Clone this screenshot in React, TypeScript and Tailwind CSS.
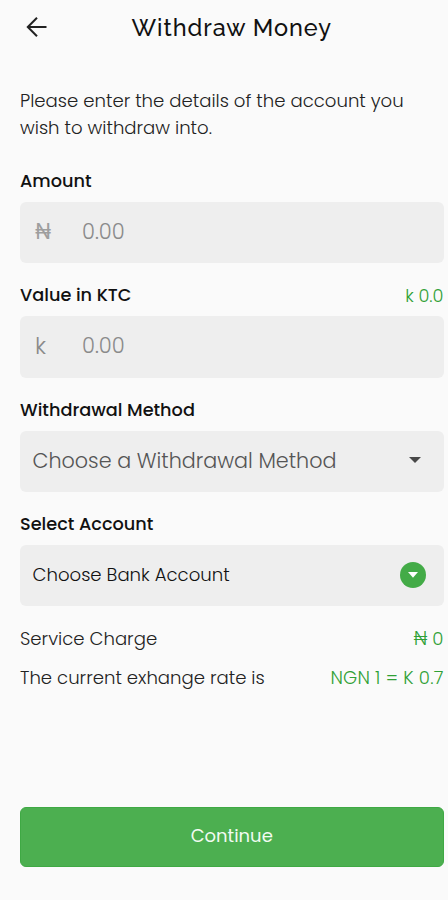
import type { ReactNode } from "react";

const body = "font-['Poppins','Inter','Liberation_Sans',sans-serif] [font-feature-settings:'cv11']";

function Label({ children, value }: { children: ReactNode; value?: ReactNode }) {
  return (
    <div className="flex h-[53px] items-end justify-between pb-2 text-[17.7px] leading-[26px] whitespace-nowrap">
      <label className="font-medium text-[#111111]">{children}</label>
      {value}
    </div>
  );
}

function Field({ children }: { children: ReactNode }) {
  return (
    <div className="flex h-[61.3px] items-center rounded-md bg-[#eeeeee] pb-[2px] whitespace-nowrap">
      {children}
    </div>
  );
}

export default function App() {
  return (
    <main className={`flex h-[900px] w-[448px] flex-col bg-[#fafafa] pr-[4.5px] pl-5 ${body}`}>
      <header className="flex h-[54px] shrink-0 items-center">
        <svg className="ml-[6px] h-[22px] w-[22px]" viewBox="0 0 22 22" fill="none" stroke="#222222" strokeWidth="2">
          <path d="M20.5 11H2M11 1.8L1.8 11L11 20.2" />
        </svg>
        <h1 className="ml-[83.5px] pt-px font-['Raleway','Lato',sans-serif] text-[23.5px] leading-8 font-medium tracking-[0.95px] whitespace-nowrap text-[#111111]">
          Withdraw Money
        </h1>
      </header>

      <p className="mt-[33px] text-[18.1px] leading-[27px] font-light whitespace-nowrap text-[#222222]">
        Please enter the details of the account you
        <br />
        wish to withdraw into.
      </p>

      <div className="mt-2">
        <Label>Amount</Label>
        <Field>
          <span className="w-[62px] pl-[15px] text-[21px] text-[#9e9e9e]">₦</span>
          <span className="text-[21px] font-light text-[#8a8a8a]">0.00</span>
        </Field>
        <Label value={<span className="leading-6 font-light text-[#2fa035]">k 0.0</span>}>
          Value in KTC
        </Label>
        <Field>
          <span className="w-[62px] pl-[15px] text-[23px] font-light text-[#8a8a8a]">k</span>
          <span className="text-[21px] font-light text-[#8a8a8a]">0.00</span>
        </Field>
        <Label>Withdrawal Method</Label>
        <Field>
          <span className="flex-1 pl-[12.5px] text-[20.7px] font-light text-[#555555]">
            Choose a Withdrawal Method
          </span>
          <svg className="mr-[23px] h-[6px] w-3" viewBox="0 0 12 6">
            <path d="M0 0H12L6 6Z" fill="#484848" />
          </svg>
        </Field>
        <Label>Select Account</Label>
        <Field>
          <span className="flex-1 pl-[12.5px] text-[18.1px] font-light text-[#111111]">Choose Bank Account</span>
          <span className="mr-[17.5px] flex h-[26px] w-[26px] items-center justify-center rounded-full bg-[#43ab47]">
            <svg className="h-[6px] w-[10px]" viewBox="0 0 10 6">
              <path d="M0 0H10L5 5.8Z" fill="#ffffff" />
            </svg>
          </span>
        </Field>
      </div>

      <div className="mt-[13px] flex flex-col text-[18.1px] leading-[39px] font-light whitespace-nowrap text-[#222222]">
        <div className="flex justify-between">
          <span>Service Charge</span>
          <span className="text-[#2fa035]">₦ 0</span>
        </div>
        <div className="flex justify-between">
          <span>The current exhange rate is</span>
          <span className="tracking-[0.18px] text-[#2fa035]">NGN 1 = K 0.7</span>
        </div>
      </div>

      <button className="mt-auto mb-[33px] h-[60px] shrink-0 rounded-md border border-[#3fa944] bg-[#4caf50] pb-[3px] text-[18px] text-[#f2fbf2]">
        Continue
      </button>
    </main>
  );
}
